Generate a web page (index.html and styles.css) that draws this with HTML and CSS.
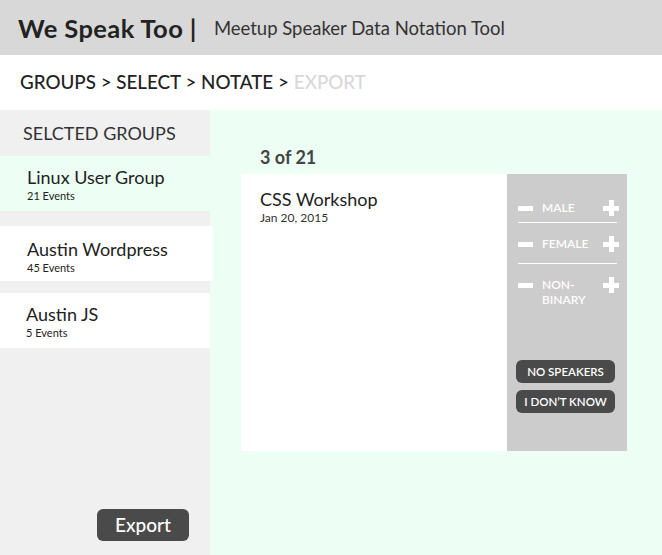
FILE: index.html
```html
<!DOCTYPE html>
<html>
<head>
<meta charset="utf-8">
<link rel="stylesheet" href="styles.css">
</head>
<body>
<header class="topbar">
  <span class="brand">We Speak Too |</span>
  <span class="tagline">Meetup Speaker Data Notation Tool</span>
</header>
<nav class="steps">
  <span class="step">GROUPS &gt; SELECT &gt; NOTATE &gt;</span>
  <span class="step step-off">EXPORT</span>
</nav>
<div class="body">
  <aside class="sidebar">
    <div class="side-title">SELCTED GROUPS</div>
    <div class="group group-active">
      <div class="group-name">Linux User Group</div>
      <div class="group-count">21 Events</div>
    </div>
    <div class="group group-wide">
      <div class="group-name">Austin Wordpress</div>
      <div class="group-count">45 Events</div>
    </div>
    <div class="group group-last">
      <div class="group-name">Austin JS</div>
      <div class="group-count">5 Events</div>
    </div>
    <div class="side-foot">
      <button class="export-btn">Export</button>
    </div>
  </aside>
  <main class="main">
    <div class="counter">3 of 21</div>
    <div class="card">
      <div class="event">
        <div class="event-name">CSS Workshop</div>
        <div class="event-date">Jan 20, 2015</div>
      </div>
      <div class="panel">
        <div class="row row-first">
          <span class="minus"></span>
          <span class="label">MALE</span>
          <span class="plus"></span>
        </div>
        <div class="row">
          <span class="minus"></span>
          <span class="label">FEMALE</span>
          <span class="plus"></span>
        </div>
        <div class="row row-last">
          <span class="minus"></span>
          <span class="label">NON-<br>BINARY</span>
          <span class="plus"></span>
        </div>
        <div class="actions">
          <button class="pill">NO SPEAKERS</button>
          <button class="pill">I DON’T KNOW</button>
        </div>
      </div>
    </div>
  </main>
</div>
</body>
</html>
```
FILE: styles.css
```css
* { box-sizing: border-box; }
html, body { margin: 0; padding: 0; }
body {
  width: 662px;
  height: 555px;
  overflow: hidden;
  font-family: Lato, "Noto Sans", sans-serif;
  color: #222;
  background: #edfff4;
}
.topbar {
  height: 55px;
  background: #d8d8d8;
  display: flex;
  align-items: center;
  padding: 0 0 0 18px;
}
.brand {
  font-size: 25.5px;
  font-weight: 700;
  color: #222;
  letter-spacing: 0.4px;
}
.tagline {
  font-size: 18.5px;
  margin-left: 17px;
  color: #333;
}
.steps {
  height: 55px;
  background: #fff;
  display: flex;
  align-items: center;
  padding: 0 0 2px 20px;
  gap: 5px;
  font-size: 18.8px;
  font-weight: 500;
}
.step { color: #222; }
.step-off { color: #d8d8d8; }
.body {
  display: flex;
  height: 445px;
}
.sidebar {
  width: 210px;
  background: #f0f0f0;
  display: flex;
  flex-direction: column;
}
.side-title {
  height: 46px;
  padding: 12px 0 0 23px;
  font-size: 18px;
  color: #333;
}
.group {
  height: 55px;
  background: #fff;
  padding: 10px 0 0 27px;
  margin-bottom: 12px;
  width: 210px;
}
.group-active {
  background: #edfff4;
  margin-bottom: 15px;
}
.group-wide { width: 213px; padding-top: 12px; }
.group-last { padding-left: 26px; }
.group-name {
  font-size: 18px;
  color: #222;
  line-height: 22px;
}
.group-count {
  font-size: 11px;
  color: #222;
  line-height: 15px;
}
.side-foot {
  flex: 1;
  display: flex;
  align-items: flex-end;
  justify-content: flex-end;
  padding: 0 21px 14px 0;
}
.export-btn {
  width: 92px;
  height: 32px;
  border: none;
  border-radius: 6px;
  background: #4a4a4a;
  color: #fff;
  font-family: inherit;
  font-size: 19px;
  font-weight: 500;
  padding: 0 0 2px;
}
.main {
  flex: 1;
  padding: 36px 0 0 31px;
}
.counter {
  font-size: 18px;
  font-weight: 700;
  color: #444;
  padding-left: 19px;
  height: 28px;
}
.card {
  width: 386px;
  height: 277px;
  display: flex;
}
.event {
  width: 266px;
  background: #fff;
  padding: 14px 0 0 19px;
}
.event-name {
  font-size: 18px;
  line-height: 22px;
  color: #222;
}
.event-date {
  font-size: 12px;
  color: #333;
  line-height: 16px;
}
.panel {
  width: 120px;
  background: #cccccc;
  padding: 13px 10px 0 11px;
  display: flex;
  flex-direction: column;
}
.row {
  display: flex;
  align-items: flex-start;
  border-bottom: 1px solid #fff;
  height: 41px;
  padding-top: 13px;
}
.row-first { height: 36px; }
.row-last { border-bottom: none; height: auto; }
.minus {
  width: 15px;
  height: 5px;
  background: #fff;
  margin-top: 6px;
  flex: none;
}
.label {
  color: #fff;
  font-size: 12px;
  font-weight: 600;
  line-height: 15px;
  margin-left: 9px;
  flex: 1;
}
.plus {
  width: 16px;
  height: 16px;
  position: relative;
  flex: none;
  margin-right: -2px;
}
.plus::before, .plus::after {
  content: "";
  position: absolute;
  background: #fff;
}
.plus::before { left: 0; top: 6px; width: 16px; height: 5px; }
.plus::after { left: 6px; top: 0; width: 5px; height: 16px; }
.actions {
  margin-top: 53px;
  display: flex;
  flex-direction: column;
  gap: 7px;
  margin-left: -2px;
}
.pill {
  width: 99px;
  height: 23px;
  border: none;
  border-radius: 6px;
  background: #4a4a4a;
  color: #fff;
  font-family: inherit;
  font-size: 11.5px;
  font-weight: 600;
  padding: 0;
}
```
